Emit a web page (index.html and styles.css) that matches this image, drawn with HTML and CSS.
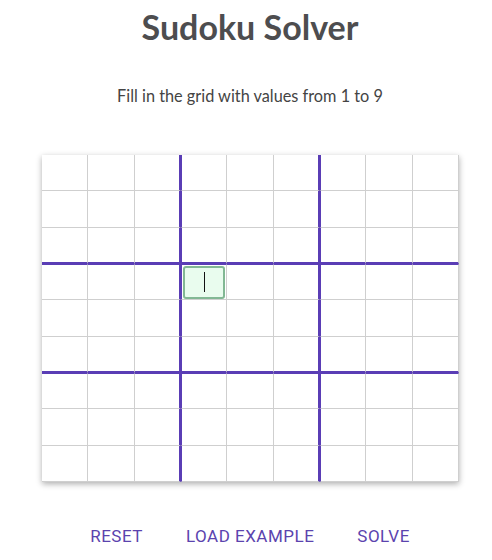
FILE: index.html
```html
<!DOCTYPE html>
<html>
<head>
<meta charset="utf-8">
<title>Sudoku Solver</title>
<link rel="stylesheet" href="styles.css">
</head>
<body>
<div class="app">
  <h1 class="title">Sudoku Solver</h1>
  <p class="subtitle">Fill in the grid with values from 1 to 9</p>
  <div class="board" id="board"></div>
  <div class="actions">
    <button class="btn">RESET</button>
    <button class="btn">LOAD EXAMPLE</button>
    <button class="btn">SOLVE</button>
  </div>
</div>
<script src="script.js"></script>
</body>
</html>
```
FILE: styles.css
```css
html, body {
  margin: 0;
  padding: 0;
  background: #ffffff;
}
.app {
  width: 500px;
  text-align: center;
}
.title {
  margin: 7px 0 0;
  font-family: "Lato", sans-serif;
  font-weight: 700;
  font-size: 34px;
  line-height: 40px;
  color: #4d4d4f;
}
.subtitle {
  margin: 39px 0 0;
  font-family: "Lato", sans-serif;
  font-size: 16.3px;
  line-height: 20px;
  color: #444;
}
.board {
  margin: 49px auto 0;
  width: 417px;
  height: 327px;
  display: grid;
  grid-template-columns: repeat(9, 1fr);
  grid-template-rows: repeat(9, 1fr);
  box-shadow: 0 2px 6px rgba(0, 0, 0, 0.32);
  background: #fff;
  position: relative;
  left: 0.5px;
}
.cell {
  box-sizing: border-box;
  border-right: 1px solid #cfcfcf;
  border-bottom: 1px solid #cfcfcf;
  display: flex;
  align-items: flex-start;
  justify-content: flex-start;
}
.cell.tr { border-right: 2px solid #5a3db5; }
.cell.tl { border-left: 1px solid #5a3db5; }
.cell.tb { border-bottom: 2px solid #5a3db5; }
.cell.tt { border-top: 1px solid #5a3db5; }
.input {
  box-sizing: border-box;
  margin: 1px 0 0 1px;
  width: 42px;
  height: 33px;
  background: #e9fcee;
  border: 2px solid #82b894;
  border-radius: 3px;
  display: flex;
  align-items: center;
  justify-content: center;
}
.caret {
  width: 1px;
  height: 20px;
  background: #111;
  margin-left: 2px;
}
.actions {
  margin-top: 44px;
  display: flex;
  justify-content: center;
  gap: 43px;
}
.btn {
  border: none;
  background: none;
  padding: 0;
  margin: 0;
  font-family: "Roboto", sans-serif;
  font-size: 17px;
  letter-spacing: 0.5px;
  line-height: 20px;
  color: #5b43ae;
}
```
FILE: script.js
```js
var board = document.getElementById('board');
for (var r = 0; r < 9; r++) {
  for (var c = 0; c < 9; c++) {
    var d = document.createElement('div');
    d.className = 'cell';
    if (c === 2 || c === 5) d.className += ' tr';
    if (c === 3 || c === 6) d.className += ' tl';
    if (r === 2 || r === 5) d.className += ' tb';
    if (r === 3 || r === 6) d.className += ' tt';
    if (r === 3 && c === 3) {
      var i = document.createElement('div');
      i.className = 'input';
      var k = document.createElement('span');
      k.className = 'caret';
      i.appendChild(k);
      d.appendChild(i);
    }
    board.appendChild(d);
  }
}
```
